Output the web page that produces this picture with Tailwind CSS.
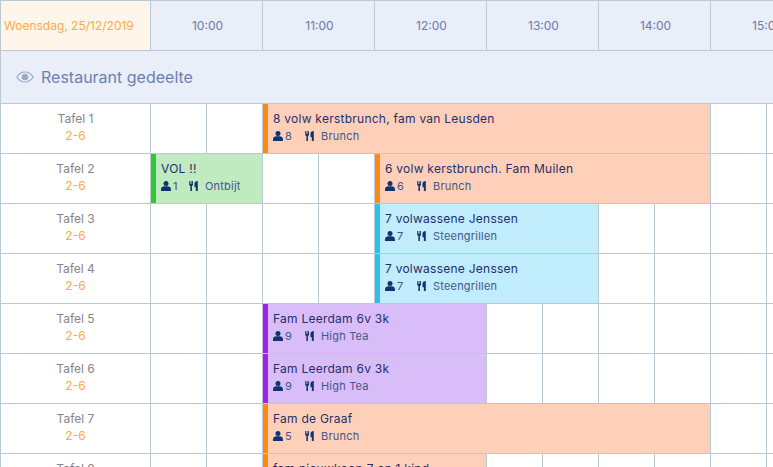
<!DOCTYPE html>
<html lang="en">
<head>
    <meta charset="UTF-8" />
    <title>Planning</title>
    <script src="https://cdn.jsdelivr.net/npm/@tailwindcss/browser@4"></script>
</head>
<body class="bg-white overflow-hidden font-['Inter',sans-serif]">
    <svg class="hidden">
        <symbol id="user" viewBox="0 0 14 14"><circle cx="7" cy="3.6" r="3.5" fill="currentColor"/><path d="M0 14v-2.200C0 9.200 2.200 7.400 4.600 7.400h4.800c2.400 0 4.600 1.800 4.600 4.400V14z" fill="currentColor"/></symbol>
        <symbol id="food" viewBox="0 0 12 14"><path d="M0 0h1.200v4h.9V0h1.100v4h.9V0h1.200v5c0 1-.7 1.700-1.500 1.900V14H1.600V6.900C.7 6.700 0 6 0 5zM12 0v14H9.300V8.800H7.400V3.400C7.400 1.400 9.400 0 12 0z" fill="currentColor"/></symbol>
    </svg>

    <div class="w-[822px] h-[467px] overflow-hidden">
        <!-- header -->
        <div class="grid grid-cols-[150px_repeat(6,112px)] h-[51px] border-t border-b border-[#b9c8d3] bg-[#e9eef8] text-[12px] text-[#6b7ba8]">
            <div class="border-l border-[#b9c8d3] bg-[#fff6eb] text-[#ffa94a] flex items-center pl-[3px] text-[12px] whitespace-nowrap">Woensdag, 25/12/2019</div>
            <div class="border-l border-[#b9c8d3] flex items-center justify-center pl-[2px]">10:00</div>
            <div class="border-l border-[#b9c8d3] flex items-center justify-center pl-[2px]">11:00</div>
            <div class="border-l border-[#b9c8d3] flex items-center justify-center pl-[2px]">12:00</div>
            <div class="border-l border-[#b9c8d3] flex items-center justify-center pl-[2px]">13:00</div>
            <div class="border-l border-[#b9c8d3] flex items-center justify-center pl-[2px]">14:00</div>
            <div class="border-l border-[#b9c8d3] flex items-center justify-center pl-[2px]">15:00</div>
        </div>

        <!-- section -->
        <div class="h-[53px] border-b border-l border-[#b9c8d3] bg-[#e9eef8] flex items-center pl-[15px] gap-[7px]">
            <svg class="w-[18px] h-[12px] text-[#9aa9c9]" viewBox="0 0 18 12" fill="none" stroke="currentColor" stroke-width="1.2"><path d="M.8 6C3 2.600 5.800 1 9 1s6 1.600 8.200 5C15 9.400 12.200 11 9 11S3 9.400.8 6z"/><circle cx="9" cy="6" r="3.300" fill="currentColor" stroke="none"/></svg>
            <span class="text-[16px] text-[#6d80b3]">Restaurant gedeelte</span>
        </div>

        <!-- Tafel 1 -->
        <div class="grid grid-cols-[150px_repeat(12,56px)] h-[50px] border-b border-[#b9c8d3]">
            <div class="border-l border-[#b9c8d3] flex flex-col items-center justify-center gap-[1px] pb-[3px] text-[12px] leading-[16px]"><span class="text-[#85858a]">Tafel 1</span><span class="text-[#ffa94a]">2-6</span></div>
            <div class="border-l border-[#b9c8d3]"></div>
            <div class="border-l border-[#b9c8d3]"></div>
            <div class="col-span-8 border-l border-[#b9c8d3]">
                <div class="h-full border-l-[5px] border-[#ff8a0f] bg-[#fed0b9] pl-[5px] text-[#1e2f6b]">
                    <div class="text-[12px] tracking-[0.25px] leading-[16px] pt-[7px] whitespace-nowrap">8 volw kerstbrunch, fam van Leusden</div>
                    <div class="flex items-center text-[11px] text-[#46568a] mt-[1px] h-[16px]"><svg class="w-[10px] h-[10px] text-[#0f3470] mr-[2px]"><use href="#user"/></svg><span class="w-[20px]">8</span><svg class="w-[9px] h-[10px] text-[#0f3470] mr-[7px]"><use href="#food"/></svg><span class="tracking-[0.2px]">Brunch</span></div>
                </div>
            </div>
            <div class="border-l border-[#b9c8d3]"></div>
            <div class="border-l border-[#b9c8d3]"></div>
        </div>

        <!-- Tafel 2 -->
        <div class="grid grid-cols-[150px_repeat(12,56px)] h-[50px] border-b border-[#b9c8d3]">
            <div class="border-l border-[#b9c8d3] flex flex-col items-center justify-center gap-[1px] pb-[3px] text-[12px] leading-[16px]"><span class="text-[#85858a]">Tafel 2</span><span class="text-[#ffa94a]">2-6</span></div>
            <div class="col-span-2 border-l border-[#b9c8d3]">
                <div class="h-full border-l-[5px] border-[#2ec92e] bg-[#c0eac0] pl-[5px] text-[#1e2f6b]">
                    <div class="text-[12px] tracking-[0.25px] leading-[16px] pt-[7px] whitespace-nowrap">VOL !!</div>
                    <div class="flex items-center text-[11px] text-[#46568a] mt-[1px] h-[16px]"><svg class="w-[10px] h-[10px] text-[#0f3470] mr-[2px]"><use href="#user"/></svg><span class="w-[16px]">1</span><svg class="w-[9px] h-[10px] text-[#0f3470] mr-[7px]"><use href="#food"/></svg><span class="tracking-[0.2px]">Ontbijt</span></div>
                </div>
            </div>
            <div class="border-l border-[#b9c8d3]"></div>
            <div class="border-l border-[#b9c8d3]"></div>
            <div class="col-span-6 border-l border-[#b9c8d3]">
                <div class="h-full border-l-[5px] border-[#ff8a0f] bg-[#fed0b9] pl-[5px] text-[#1e2f6b]">
                    <div class="text-[12px] tracking-[0.25px] leading-[16px] pt-[7px] whitespace-nowrap">6 volw kerstbrunch. Fam Muilen</div>
                    <div class="flex items-center text-[11px] text-[#46568a] mt-[1px] h-[16px]"><svg class="w-[10px] h-[10px] text-[#0f3470] mr-[2px]"><use href="#user"/></svg><span class="w-[20px]">6</span><svg class="w-[9px] h-[10px] text-[#0f3470] mr-[7px]"><use href="#food"/></svg><span class="tracking-[0.2px]">Brunch</span></div>
                </div>
            </div>
            <div class="border-l border-[#b9c8d3]"></div>
            <div class="border-l border-[#b9c8d3]"></div>
        </div>

        <!-- Tafel 3 -->
        <div class="grid grid-cols-[150px_repeat(12,56px)] h-[50px] border-b border-[#b9c8d3]">
            <div class="border-l border-[#b9c8d3] flex flex-col items-center justify-center gap-[1px] pb-[3px] text-[12px] leading-[16px]"><span class="text-[#85858a]">Tafel 3</span><span class="text-[#ffa94a]">2-6</span></div>
            <div class="border-l border-[#b9c8d3]"></div>
            <div class="border-l border-[#b9c8d3]"></div>
            <div class="border-l border-[#b9c8d3]"></div>
            <div class="border-l border-[#b9c8d3]"></div>
            <div class="col-span-4 border-l border-[#b9c8d3]">
                <div class="h-full border-l-[5px] border-[#2cc0ee] bg-[#c0ecfb] pl-[5px] text-[#1e2f6b]">
                    <div class="text-[12px] tracking-[0.25px] leading-[16px] pt-[7px] whitespace-nowrap">7 volwassene Jenssen</div>
                    <div class="flex items-center text-[11px] text-[#46568a] mt-[1px] h-[16px]"><svg class="w-[10px] h-[10px] text-[#0f3470] mr-[2px]"><use href="#user"/></svg><span class="w-[20px]">7</span><svg class="w-[9px] h-[10px] text-[#0f3470] mr-[7px]"><use href="#food"/></svg><span class="tracking-[0.2px]">Steengrillen</span></div>
                </div>
            </div>
            <div class="border-l border-[#b9c8d3]"></div>
            <div class="border-l border-[#b9c8d3]"></div>
            <div class="border-l border-[#b9c8d3]"></div>
            <div class="border-l border-[#b9c8d3]"></div>
        </div>

        <!-- Tafel 4 -->
        <div class="grid grid-cols-[150px_repeat(12,56px)] h-[50px] border-b border-[#b9c8d3]">
            <div class="border-l border-[#b9c8d3] flex flex-col items-center justify-center gap-[1px] pb-[3px] text-[12px] leading-[16px]"><span class="text-[#85858a]">Tafel 4</span><span class="text-[#ffa94a]">2-6</span></div>
            <div class="border-l border-[#b9c8d3]"></div>
            <div class="border-l border-[#b9c8d3]"></div>
            <div class="border-l border-[#b9c8d3]"></div>
            <div class="border-l border-[#b9c8d3]"></div>
            <div class="col-span-4 border-l border-[#b9c8d3]">
                <div class="h-full border-l-[5px] border-[#2cc0ee] bg-[#c0ecfb] pl-[5px] text-[#1e2f6b]">
                    <div class="text-[12px] tracking-[0.25px] leading-[16px] pt-[7px] whitespace-nowrap">7 volwassene Jenssen</div>
                    <div class="flex items-center text-[11px] text-[#46568a] mt-[1px] h-[16px]"><svg class="w-[10px] h-[10px] text-[#0f3470] mr-[2px]"><use href="#user"/></svg><span class="w-[20px]">7</span><svg class="w-[9px] h-[10px] text-[#0f3470] mr-[7px]"><use href="#food"/></svg><span class="tracking-[0.2px]">Steengrillen</span></div>
                </div>
            </div>
            <div class="border-l border-[#b9c8d3]"></div>
            <div class="border-l border-[#b9c8d3]"></div>
            <div class="border-l border-[#b9c8d3]"></div>
            <div class="border-l border-[#b9c8d3]"></div>
        </div>

        <!-- Tafel 5 -->
        <div class="grid grid-cols-[150px_repeat(12,56px)] h-[50px] border-b border-[#b9c8d3]">
            <div class="border-l border-[#b9c8d3] flex flex-col items-center justify-center gap-[1px] pb-[3px] text-[12px] leading-[16px]"><span class="text-[#85858a]">Tafel 5</span><span class="text-[#ffa94a]">2-6</span></div>
            <div class="border-l border-[#b9c8d3]"></div>
            <div class="border-l border-[#b9c8d3]"></div>
            <div class="col-span-4 border-l border-[#b9c8d3]">
                <div class="h-full border-l-[5px] border-[#a020f0] bg-[#d9bdf8] pl-[5px] text-[#1e2f6b]">
                    <div class="text-[12px] tracking-[0.25px] leading-[16px] pt-[7px] whitespace-nowrap">Fam Leerdam 6v 3k</div>
                    <div class="flex items-center text-[11px] text-[#46568a] mt-[1px] h-[16px]"><svg class="w-[10px] h-[10px] text-[#0f3470] mr-[2px]"><use href="#user"/></svg><span class="w-[20px]">9</span><svg class="w-[9px] h-[10px] text-[#0f3470] mr-[7px]"><use href="#food"/></svg><span class="tracking-[0.2px]">High Tea</span></div>
                </div>
            </div>
            <div class="border-l border-[#b9c8d3]"></div>
            <div class="border-l border-[#b9c8d3]"></div>
            <div class="border-l border-[#b9c8d3]"></div>
            <div class="border-l border-[#b9c8d3]"></div>
            <div class="border-l border-[#b9c8d3]"></div>
            <div class="border-l border-[#b9c8d3]"></div>
        </div>

        <!-- Tafel 6 -->
        <div class="grid grid-cols-[150px_repeat(12,56px)] h-[50px] border-b border-[#b9c8d3]">
            <div class="border-l border-[#b9c8d3] flex flex-col items-center justify-center gap-[1px] pb-[3px] text-[12px] leading-[16px]"><span class="text-[#85858a]">Tafel 6</span><span class="text-[#ffa94a]">2-6</span></div>
            <div class="border-l border-[#b9c8d3]"></div>
            <div class="border-l border-[#b9c8d3]"></div>
            <div class="col-span-4 border-l border-[#b9c8d3]">
                <div class="h-full border-l-[5px] border-[#a020f0] bg-[#d9bdf8] pl-[5px] text-[#1e2f6b]">
                    <div class="text-[12px] tracking-[0.25px] leading-[16px] pt-[7px] whitespace-nowrap">Fam Leerdam 6v 3k</div>
                    <div class="flex items-center text-[11px] text-[#46568a] mt-[1px] h-[16px]"><svg class="w-[10px] h-[10px] text-[#0f3470] mr-[2px]"><use href="#user"/></svg><span class="w-[20px]">9</span><svg class="w-[9px] h-[10px] text-[#0f3470] mr-[7px]"><use href="#food"/></svg><span class="tracking-[0.2px]">High Tea</span></div>
                </div>
            </div>
            <div class="border-l border-[#b9c8d3]"></div>
            <div class="border-l border-[#b9c8d3]"></div>
            <div class="border-l border-[#b9c8d3]"></div>
            <div class="border-l border-[#b9c8d3]"></div>
            <div class="border-l border-[#b9c8d3]"></div>
            <div class="border-l border-[#b9c8d3]"></div>
        </div>

        <!-- Tafel 7 -->
        <div class="grid grid-cols-[150px_repeat(12,56px)] h-[50px] border-b border-[#b9c8d3]">
            <div class="border-l border-[#b9c8d3] flex flex-col items-center justify-center gap-[1px] pb-[3px] text-[12px] leading-[16px]"><span class="text-[#85858a]">Tafel 7</span><span class="text-[#ffa94a]">2-6</span></div>
            <div class="border-l border-[#b9c8d3]"></div>
            <div class="border-l border-[#b9c8d3]"></div>
            <div class="col-span-8 border-l border-[#b9c8d3]">
                <div class="h-full border-l-[5px] border-[#ff8a0f] bg-[#fed0b9] pl-[5px] text-[#1e2f6b]">
                    <div class="text-[12px] tracking-[0.25px] leading-[16px] pt-[7px] whitespace-nowrap">Fam de Graaf</div>
                    <div class="flex items-center text-[11px] text-[#46568a] mt-[1px] h-[16px]"><svg class="w-[10px] h-[10px] text-[#0f3470] mr-[2px]"><use href="#user"/></svg><span class="w-[20px]">5</span><svg class="w-[9px] h-[10px] text-[#0f3470] mr-[7px]"><use href="#food"/></svg><span class="tracking-[0.2px]">Brunch</span></div>
                </div>
            </div>
            <div class="border-l border-[#b9c8d3]"></div>
            <div class="border-l border-[#b9c8d3]"></div>
        </div>

        <!-- Tafel 8 -->
        <div class="grid grid-cols-[150px_repeat(12,56px)] h-[50px] border-b border-[#b9c8d3]">
            <div class="border-l border-[#b9c8d3] flex flex-col items-center justify-center gap-[1px] pb-[3px] text-[12px] leading-[16px]"><span class="text-[#85858a]">Tafel 8</span><span class="text-[#ffa94a]">2-6</span></div>
            <div class="border-l border-[#b9c8d3]"></div>
            <div class="border-l border-[#b9c8d3]"></div>
            <div class="col-span-4 border-l border-[#b9c8d3]">
                <div class="h-full border-l-[5px] border-[#ff8a0f] bg-[#fed0b9] pl-[5px] text-[#1e2f6b]">
                    <div class="text-[12px] tracking-[0.25px] leading-[16px] pt-[7px] whitespace-nowrap">fam nieuwkoop 7 en 1 kind</div>
                </div>
            </div>
            <div class="border-l border-[#b9c8d3]"></div>
            <div class="border-l border-[#b9c8d3]"></div>
            <div class="border-l border-[#b9c8d3]"></div>
            <div class="border-l border-[#b9c8d3]"></div>
            <div class="border-l border-[#b9c8d3]"></div>
            <div class="border-l border-[#b9c8d3]"></div>
        </div>
    </div>
</body>
</html>
